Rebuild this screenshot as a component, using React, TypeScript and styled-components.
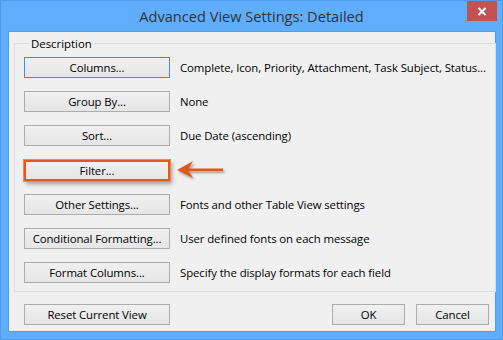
import React from 'react';
import styled, { createGlobalStyle } from 'styled-components';

const Global = createGlobalStyle`
  html, body { margin: 0; padding: 0; }
  body { width: 503px; height: 340px; overflow: hidden; font-family: "Open Sans", "Noto Sans", sans-serif; }
`;

const Window = styled.div`
  box-sizing: border-box;
  width: 503px;
  height: 340px;
  background: #60aefb;
  border: 1px solid #4c9be6;
  display: flex;
  flex-direction: column;
`;

const TitleBar = styled.div`
  height: 30px;
  display: grid;
  grid-template-columns: 1fr auto 1fr;
  align-items: start;
`;

const Title = styled.div`
  grid-column: 2;
  font-size: 14.6px;
  line-height: 31px;
  color: #333;
`;

const CloseButton = styled.div`
  grid-column: 3;
  justify-self: end;
  width: 30px;
  height: 20px;
  margin-right: 5px;
  background: #c75050;
  display: flex;
  align-items: center;
  justify-content: center;
`;

const Client = styled.div`
  box-sizing: border-box;
  margin: 0 6px 7px 7px;
  flex: 1;
  background: #f0f0f0;
  border: 1px solid #4f9de3;
  padding: 4px 6px 0 5px;
  display: flex;
  flex-direction: column;
`;

const Group = styled.fieldset`
  margin: 0;
  padding: 6px 9px 7px 9px;
  border: 1px solid #dcdcdc;
  height: 256px;
  box-sizing: border-box;
  legend {
    font-size: 11.4px;
    color: #000;
    padding: 0 2px;
    margin-left: 5px;
  }
`;

const Rows = styled.div`
  display: grid;
  grid-template-columns: 146px 1fr;
  column-gap: 10px;
  row-gap: 13px;
  align-items: center;
`;

const Button = styled.div<{ $focused?: boolean; $marked?: boolean; $w?: number }>`
  box-sizing: border-box;
  width: ${p => p.$w ?? 146}px;
  height: 21px;
  border: 1px solid ${p => (p.$focused ? '#3c8ee6' : '#acacac')};
  background: linear-gradient(#f0f0f0, #e5e5e5);
  font-size: 11.4px;
  letter-spacing: -0.1px;
  color: #000;
  display: flex;
  align-items: center;
  justify-content: center;
  ${p => p.$marked && `
    border: 2px solid #e4581c;
    box-shadow: 0 0 0 1px #f08a55, 2px 3px 4px rgba(0,0,0,0.35);
  `}
`;

const Info = styled.div`
  font-size: 11.4px;
  letter-spacing: -0.1px;
  color: #000;
  white-space: nowrap;
`;

const Footer = styled.div`
  display: flex;
  align-items: center;
  gap: 11px;
  padding: 12px 0 0 10px;
`;

const Spacer = styled.div`
  flex: 1;
`;

const rows: [string, string][] = [
  ['Columns...', 'Complete, Icon, Priority, Attachment, Task Subject, Status...'],
  ['Group By...', 'None'],
  ['Sort...', 'Due Date (ascending)'],
  ['Filter...', ''],
  ['Other Settings...', 'Fonts and other Table View settings'],
  ['Conditional Formatting...', 'User defined fonts on each message'],
  ['Format Columns...', 'Specify the display formats for each field'],
];

function Arrow() {
  return (
    <svg width="52" height="22" viewBox="0 0 52 22" style={{ display: 'block', marginLeft: -4 }}>
      <defs>
        <filter id="sh" x="-20%" y="-40%" width="140%" height="180%">
          <feDropShadow dx="1.5" dy="2" stdDeviation="1.2" floodColor="#000" floodOpacity="0.35" />
        </filter>
      </defs>
      <g filter="url(#sh)">
        <path d="M12 9.5 L47 9.5 L47 12 L12 12 Z" fill="#e0581c" />
        <path d="M1 11 L17 2 L12 11 L17 19 Z" fill="#e0581c" />
      </g>
    </svg>
  );
}

export default function App() {
  return (
    <>
      <Global />
      <Window>
        <TitleBar>
          <Title>Advanced View Settings: Detailed</Title>
          <CloseButton>
            <svg width="10" height="9" viewBox="0 0 10 9">
              <path d="M1.5 1 L8.5 8 M8.5 1 L1.5 8" stroke="#fff" strokeWidth="2" />
            </svg>
          </CloseButton>
        </TitleBar>
        <Client>
          <Group>
            <legend>Description</legend>
            <Rows>
              {rows.map(([label, info], i) => (
                <React.Fragment key={label}>
                  <Button $focused={i === 0} $marked={label === 'Filter...'}>{label}</Button>
                  {label === 'Filter...' ? <Arrow /> : <Info>{info}</Info>}
                </React.Fragment>
              ))}
            </Rows>
          </Group>
          <Footer>
            <Button>Reset Current View</Button>
            <Spacer />
            <Button $w={73}>OK</Button>
            <Button $w={73}>Cancel</Button>
          </Footer>
        </Client>
      </Window>
    </>
  );
}
